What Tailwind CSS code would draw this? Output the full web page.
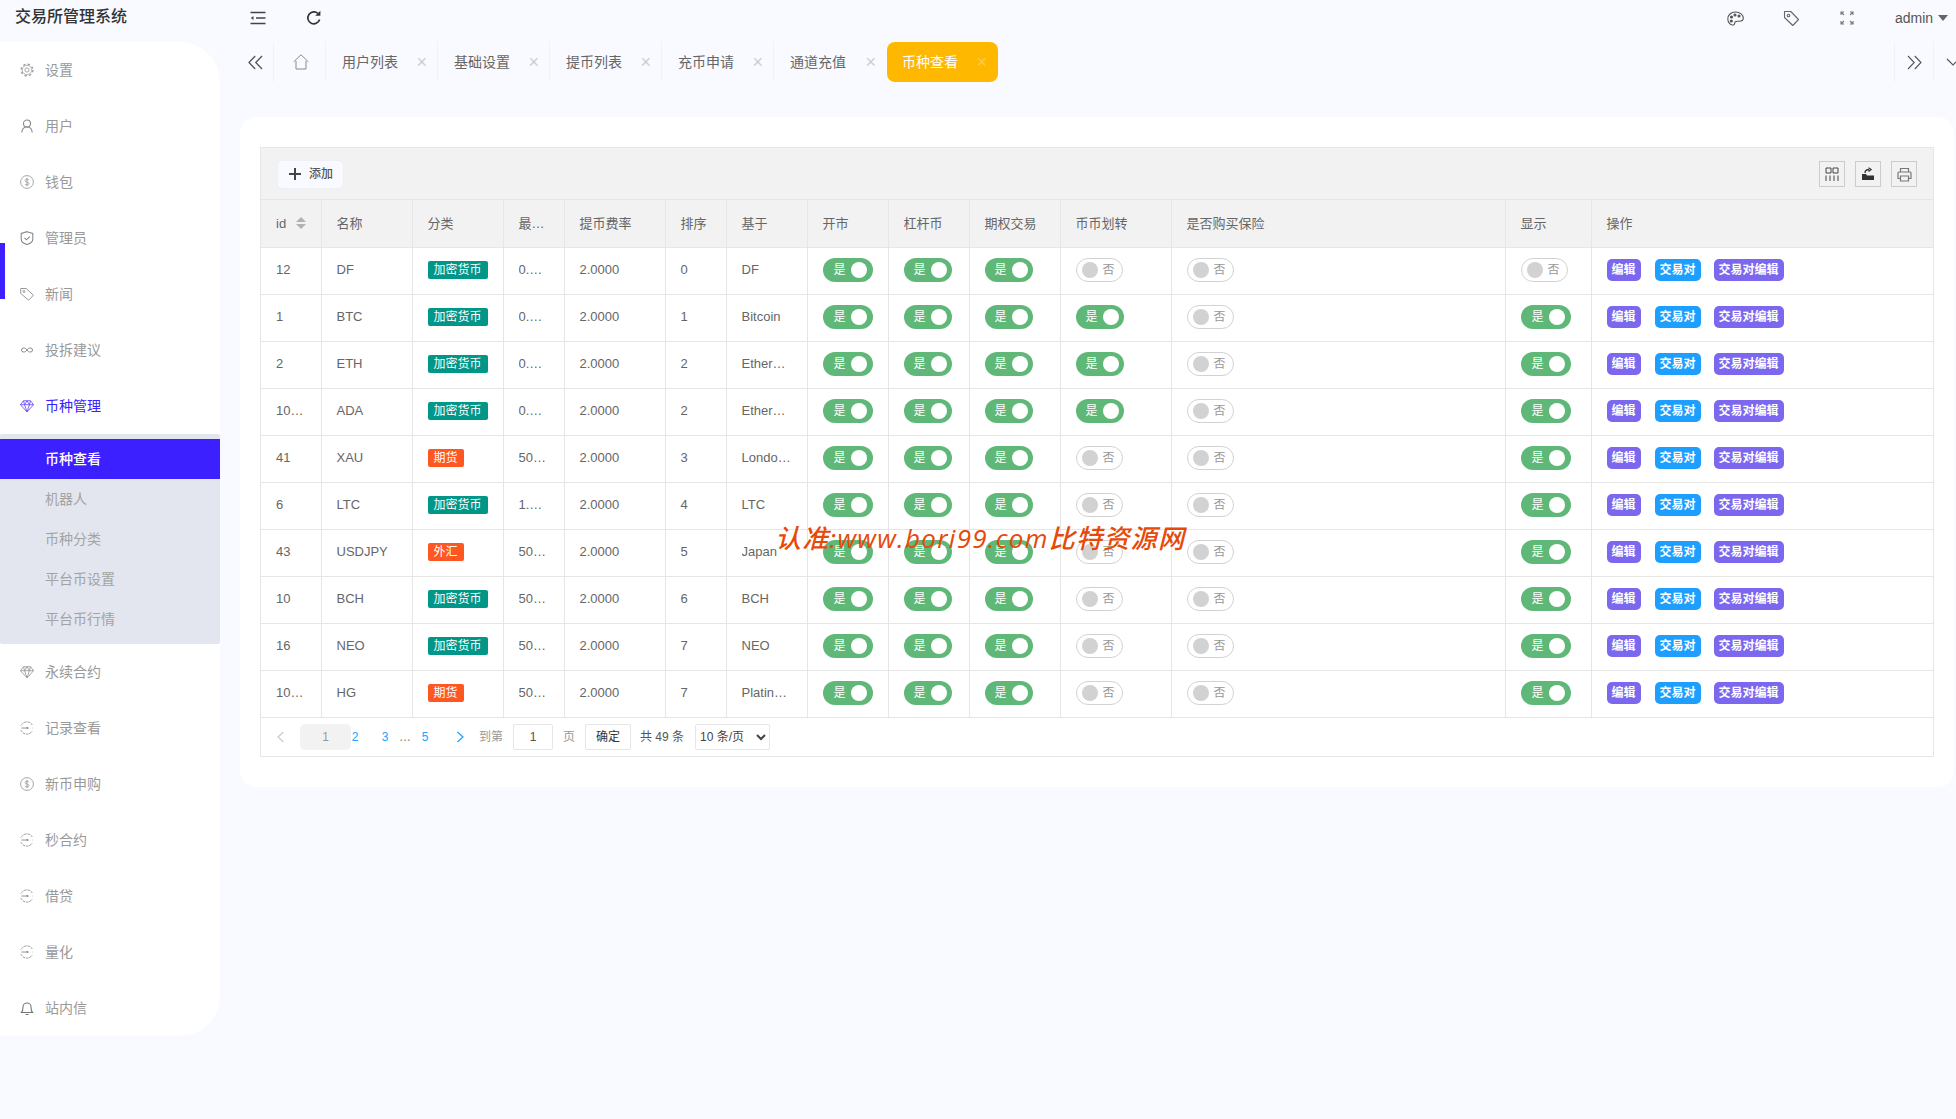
<!DOCTYPE html>
<html lang="zh"><head><meta charset="utf-8"><title>交易所管理系统</title>
<script src="https://cdn.jsdelivr.net/npm/@tailwindcss/browser@4"></script></head>
<body class="relative h-[1119px] w-[1956px] overflow-hidden bg-[#f8faff] font-['Liberation_Sans','Noto_Sans_CJK_SC',sans-serif] text-[13px] text-[#666]">
<svg class="hidden"><defs>
<symbol id="gear" viewBox="0 0 16 16"><circle cx="8" cy="8" r="6.700" fill="none" stroke="currentColor" stroke-width="1.500" stroke-dasharray="2.600 2.660"/><circle cx="8" cy="8" r="5.400" fill="none" stroke="currentColor" stroke-width=".8"/><circle cx="8" cy="8" r="2.400" fill="none" stroke="currentColor"/></symbol>
<symbol id="coin" viewBox="0 0 16 16"><circle cx="8" cy="8" r="7.300" fill="none" stroke="currentColor"/><path d="M10.200 5.800C9.800 5 8.900 4.700 8 4.700c-1.200 0-2.200.5-2.200 1.600 0 2.300 4.500 1.200 4.500 3.500 0 1.100-1 1.600-2.300 1.600-1 0-1.900-.4-2.300-1.200M8 3.200v9.600" fill="none" stroke="currentColor"/></symbol>
<symbol id="gem" viewBox="0 0 16 16"><path d="M4 2h8l3.500 4.500L8 14.800.5 6.500zM.5 6.500h15M5.200 6.500 8 14.800l2.800-8.300M4 2l1.200 4.500L8 2l2.800 4.500L12 2" fill="none" stroke="currentColor" stroke-linejoin="round"/></symbol>
<symbol id="spin" viewBox="0 0 16 16"><path d="M14 4.500A7.300 7.300 0 0 0 1 5.500M1 10.500a7.300 7.300 0 0 0 13 1" fill="none" stroke="currentColor" stroke-dasharray="2.800 1"/><path d="M1.500 8h8M14 8h.5" fill="none" stroke="currentColor"/><circle cx="8.500" cy="8" r="1.100" fill="currentColor"/></symbol>
</defs></svg>

<header class="flex h-[42px] items-center">
  <div class="w-[250px] self-start pl-[15px] pt-[6px] text-base font-medium leading-[22px] text-[#333]">交易所管理系统</div>
  <svg class="mb-[6px] size-4 text-[#444]" viewBox="0 0 16 16" fill="none" stroke="currentColor" stroke-width="1.400"><path d="M.5 2.500h15M6 8h9.500M.5 13.500h15"/><path d="M3.500 6v4L.8 8z" fill="currentColor" stroke="none"/></svg>
  <svg class="mb-[6px] ml-10 size-4 text-[#333]" viewBox="0 0 16 16" fill="none" stroke="currentColor" stroke-width="1.700"><path d="M13.600 9.500A6 6 0 1 1 12 3.500"/><path d="M9.200 5.700h5.200V.8z" fill="currentColor" stroke="none"/></svg>
  <svg class="mb-[6px] ml-[1405px] size-[17px] text-[#555]" viewBox="0 0 17 17" fill="none" stroke="currentColor" stroke-width="1.100"><path d="M8.500 2C4 2 .8 5 .8 9s3 6.500 5.700 6c1.700-.3 1-2 1.500-3 .7-1 2-.7 4-.7 2.500 0 4.300-1 4.300-3C16.300 5 13 2 8.500 2z"/><circle cx="4.500" cy="7" r="1" fill="currentColor"/><circle cx="4.300" cy="11" r="1" fill="currentColor"/><circle cx="8" cy="5" r="1" fill="currentColor"/><circle cx="12" cy="6" r="1" fill="currentColor"/></svg>
  <svg class="mb-[6px] ml-[39px] size-[17px] text-[#666]" viewBox="0 0 17 17" fill="none" stroke="currentColor" stroke-width="1.100"><path d="M1.500 1.500h6.300l7.700 8-5.700 6-8.300-8z" stroke-linejoin="round"/><circle cx="5.500" cy="5.500" r="1.300"/></svg>
  <svg class="mb-[6px] ml-[40px] size-[14px] text-[#777]" viewBox="0 0 14 14" fill="none" stroke="currentColor" stroke-width="1.100"><path d="M1 4V1h3M1 1l3 3M13 4V1h-3M13 1l-3 3M1 10v3h3M1 13l3-3M13 10v3h-3M13 13l-3-3"/></svg>
  <span class="mb-[6px] ml-[41px] text-sm text-[#555]">admin</span>
  <span class="mb-[6px] ml-[5px] size-0 border-x-[5.500px] border-t-[6px] border-x-transparent border-t-[#666]"></span>
</header>

<div class="flex items-start">
  <aside class="relative h-[994px] w-[220px] shrink-0 rounded-r-[40px] bg-white text-sm text-[#999]">
    <span class="absolute left-0 top-[201px] h-14 w-[5px] bg-[#3c20ff]"></span>
    <nav>
      <a class="flex h-14 items-center gap-[11px] pl-5"><svg class="size-[14px] text-[#999]"><use href="#gear"/></svg>设置</a>
      <a class="flex h-14 items-center gap-[11px] pl-5"><svg class="size-[14px] text-[#888]" viewBox="0 0 14 14" fill="none" stroke="currentColor" stroke-width="1.100"><circle cx="7" cy="4.500" r="3.500"/><path d="M1.800 13.500C2 10 4 8 7 8s5 2 5.200 5.500"/></svg>用户</a>
      <a class="flex h-14 items-center gap-[11px] pl-5"><svg class="size-[14px] text-[#999]"><use href="#coin"/></svg>钱包</a>
      <a class="flex h-14 items-center gap-[11px] pl-5"><svg class="size-[14px] text-[#888]" viewBox="0 0 14 14" fill="none" stroke="currentColor" stroke-width="1.100"><path d="M7 .7 12.800 2.500v5.500C12.800 10.800 10 12.700 7 13.500 4 12.700 1.200 10.800 1.200 8V2.500z"/><path d="m4.500 6.800 2 2 3.200-3.200"/></svg>管理员</a>
      <a class="flex h-14 items-center gap-[11px] pl-5"><svg class="size-[14px] text-[#999]" viewBox="0 0 14 14" fill="none" stroke="currentColor" stroke-width="1"><path d="M.7 1.500h5.500l7.200 6.700-4.700 5L.7 6.500z" stroke-linejoin="round"/><circle cx="4" cy="4.500" r="1"/></svg>新闻</a>
      <a class="flex h-14 items-center gap-[11px] pl-5"><svg class="size-[14px] text-[#888]" viewBox="0 0 14 14" fill="none" stroke="currentColor" stroke-width="1"><path d="M7 7C6 5.500 5 5 3.500 5a2 2 0 0 0 0 4C5 9 6 8.500 7 7c1-1.500 2-2 3.500-2a2 2 0 0 1 0 4C9 9 8 8.500 7 7z"/></svg>投拆建议</a>
      <a class="flex h-14 items-center gap-[11px] pl-5 text-[#3c20ff]"><svg class="size-[14px] text-[#6a50f5]"><use href="#gem"/></svg>币种管理</a>
      <div class="rounded-[2px] bg-[#e3e6ee] py-[5px] text-[#a3a3a3]">
        <a class="flex h-10 items-center bg-[#3c20ff] pl-[45px] font-medium text-white">币种查看</a>
        <a class="flex h-10 items-center pl-[45px]">机器人</a>
        <a class="flex h-10 items-center pl-[45px]">币种分类</a>
        <a class="flex h-10 items-center pl-[45px]">平台币设置</a>
        <a class="flex h-10 items-center pl-[45px]">平台币行情</a>
      </div>
      <a class="flex h-14 items-center gap-[11px] pl-5"><svg class="size-[14px] text-[#999]"><use href="#gem"/></svg>永续合约</a>
      <a class="flex h-14 items-center gap-[11px] pl-5"><svg class="size-[14px] text-[#888]"><use href="#spin"/></svg>记录查看</a>
      <a class="flex h-14 items-center gap-[11px] pl-5"><svg class="size-[14px] text-[#999]"><use href="#coin"/></svg>新币申购</a>
      <a class="flex h-14 items-center gap-[11px] pl-5"><svg class="size-[14px] text-[#888]"><use href="#spin"/></svg>秒合约</a>
      <a class="flex h-14 items-center gap-[11px] pl-5"><svg class="size-[14px] text-[#888]"><use href="#spin"/></svg>借贷</a>
      <a class="flex h-14 items-center gap-[11px] pl-5"><svg class="size-[14px] text-[#888]"><use href="#spin"/></svg>量化</a>
      <a class="flex h-14 items-center gap-[11px] pl-5"><svg class="size-[14px] text-[#777]" viewBox="0 0 14 14" fill="none" stroke="currentColor" stroke-width="1.100"><path d="M1.500 11.500c1-1 1.500-2 1.500-5.500a4 4 0 0 1 8 0c0 3.500.5 4.500 1.500 5.500zM5.500 13.500h3"/></svg>站内信</a>
    </nav>
  </aside>

  <main class="min-w-0 flex-1">
    <div class="flex h-10 items-center text-sm">
      <div class="flex h-10 w-[54px] items-center border-r border-[#f1f2f5] pl-7"><svg class="size-[15px] text-[#555]" viewBox="0 0 15 15" fill="none" stroke="currentColor" stroke-width="1.300"><path d="M7.200 1 1 7.500 7.200 14M14 1 7.800 7.500 14 14"/></svg></div>
      <div class="flex h-10 w-[52px] items-center justify-center border-r border-[#f1f2f5] pl-[3px]"><svg class="size-4 text-[#888]" viewBox="0 0 16 16" fill="none" stroke="currentColor" stroke-width="1"><path d="M.7 7.800 8 .8l7.300 7M3 7v8h10V7"/></svg></div>
      <div class="flex h-10 w-[112px] items-center justify-between border-r border-[#f1f2f5] pl-4 pr-[10px]">用户列表<span class="text-lg font-light leading-none text-[#ccc]">×</span></div>
      <div class="flex h-10 w-[112px] items-center justify-between border-r border-[#f1f2f5] pl-4 pr-[10px]">基础设置<span class="text-lg font-light leading-none text-[#ccc]">×</span></div>
      <div class="flex h-10 w-[112px] items-center justify-between border-r border-[#f1f2f5] pl-4 pr-[10px]">提币列表<span class="text-lg font-light leading-none text-[#ccc]">×</span></div>
      <div class="flex h-10 w-[112px] items-center justify-between border-r border-[#f1f2f5] pl-4 pr-[10px]">充币申请<span class="text-lg font-light leading-none text-[#ccc]">×</span></div>
      <div class="flex h-10 w-[113px] items-center justify-between pl-4 pr-[11px]">通道充值<span class="text-lg font-light leading-none text-[#ccc]">×</span></div>
      <div class="flex h-10 w-[111px] items-center justify-between rounded-lg bg-[#ffb800] pl-[15px] pr-[11px] text-white">币种查看<span class="text-lg font-light leading-none text-white/30">×</span></div>
      <div class="ml-auto flex h-10 w-10 items-center justify-center border-x border-[#f1f2f5]"><svg class="size-[15px] text-[#555]" viewBox="0 0 15 15" fill="none" stroke="currentColor" stroke-width="1.100"><path d="M1 1l6.200 6.500L1 14M7.800 1 14 7.500 7.800 14"/></svg></div>
      <div class="flex h-10 w-[22px] items-center overflow-hidden pl-3"><svg class="size-[14px] shrink-0 text-[#555]" viewBox="0 0 14 14" fill="none" stroke="currentColor" stroke-width="1.100"><path d="m1 4 6 6 6-6"/></svg></div>
    </div>

    <section class="ml-5 mr-[2px] mt-[35px] h-[670px] rounded-2xl bg-white pl-5 pr-[21px] pt-[30px]">
      <div class="w-[1674px] border border-[#e6e6e6]">
        <div class="flex h-[52px] items-center justify-between border-b border-[#e6e6e6] bg-[#f2f2f2] pl-4 pr-4 pt-[1px]">
          <button class="flex h-[29px] w-[67px] items-center gap-2 rounded-[5px] border border-[#eef0f5] bg-[#f8faff] pl-[11px] text-xs font-medium text-[#555]"><svg class="size-3 text-[#444]" viewBox="0 0 12 12" fill="none" stroke="currentColor" stroke-width="2"><path d="M6 0v12M0 6h12"/></svg>添加</button>
          <div class="flex gap-[10px]">
            <span class="flex size-[26px] items-center justify-center border border-[#ccc]"><svg class="size-[14px] text-[#444]" viewBox="0 0 14 14" fill="none" stroke="currentColor"><path d="M1 1h5v5H1zM8 1h5v5H8zM1 8.500V14M5 8.500V14M9 8.500V14M13 8.500V14"/></svg></span>
            <span class="flex size-[26px] items-center justify-center border border-[#ccc]"><svg class="size-[14px] text-[#333]" viewBox="0 0 14 14"><path d="M1 7h4l1 1.500h7V13H1z" fill="currentColor"/><path d="M4 6c0-2.500 1.500-3.500 4-3.500M7.500.8 10 2.500 7.500 4.500" fill="none" stroke="currentColor" stroke-width="1.300"/></svg></span>
            <span class="flex size-[26px] items-center justify-center border border-[#ccc]"><svg class="size-[15px] text-[#777]" viewBox="0 0 15 15" fill="none" stroke="currentColor" stroke-width="1.200"><path d="M3.500 5V1.500h8V5M3.500 11.500H1V6a1 1 0 0 1 1-1h11a1 1 0 0 1 1 1v5.500h-2.500M3.500 9h8v5h-8z"/></svg></span>
          </div>
        </div>
        <table class="w-full table-fixed border-collapse text-left [&_td]:h-[47px] [&_td]:border-b [&_td]:border-r [&_td]:border-[#e6e6e6] [&_td]:px-[15px] [&_td]:pb-[2px] [&_td:last-child]:border-r-0 [&_th]:h-[47px] [&_th]:border-b [&_th]:border-r [&_th]:border-[#e6e6e6] [&_th]:bg-[#f2f2f2] [&_th]:px-[15px] [&_th]:font-normal [&_th:last-child]:border-r-0">
          <colgroup><col class="w-[60px]"><col class="w-[91px]"><col class="w-[91px]"><col class="w-[61px]"><col class="w-[101px]"><col class="w-[61px]"><col class="w-[81px]"><col class="w-[81px]"><col class="w-[81px]"><col class="w-[91px]"><col class="w-[111px]"><col class="w-[334px]"><col class="w-[86px]"><col></colgroup>
          <thead><tr>
            <th><span class="flex items-center gap-[10px]">id<span class="flex flex-col gap-[2px]"><i class="size-0 border-x-[5px] border-b-[5px] border-x-transparent border-b-[#b2b2b2]"></i><i class="size-0 border-x-[5px] border-t-[5px] border-x-transparent border-t-[#b2b2b2]"></i></span></span></th>
            <th>名称</th><th>分类</th><th><div class="truncate">最小提币量</div></th><th>提币费率</th><th>排序</th><th>基于</th><th>开市</th><th>杠杆币</th><th>期权交易</th><th>币币划转</th><th>是否购买保险</th><th>显示</th><th>操作</th>
          </tr></thead>
          <tbody>
<tr><td>12</td><td>DF</td><td><span class="inline-block h-[18px] rounded-[2px] bg-[#009688] px-[6px] text-xs leading-[18px] text-white">加密货币</span></td><td><div class="truncate">0.0010</div></td><td>2.0000</td><td>0</td><td><div class="truncate">DF</div></td>
<td><span class="flex h-6 w-[50px] items-center justify-between rounded-full bg-[#5fb878] pl-[11px] pr-[6px] text-xs text-white">是<i class="size-4 rounded-full bg-white"></i></span></td><td><span class="flex h-6 w-[48px] items-center justify-between rounded-full bg-[#5fb878] pl-[10px] pr-[5px] text-xs text-white">是<i class="size-4 rounded-full bg-white"></i></span></td><td><span class="flex h-6 w-[48px] items-center justify-between rounded-full bg-[#5fb878] pl-[10px] pr-[5px] text-xs text-white">是<i class="size-4 rounded-full bg-white"></i></span></td>
<td><span class="flex h-6 w-[47px] items-center gap-[5px] rounded-full border border-[#d2d2d2] pl-[5px] text-xs text-[#999]"><i class="size-4 rounded-full bg-[#d2d2d2]"></i>否</span></td><td><span class="flex h-6 w-[47px] items-center gap-[5px] rounded-full border border-[#d2d2d2] pl-[5px] text-xs text-[#999]"><i class="size-4 rounded-full bg-[#d2d2d2]"></i>否</span></td><td><span class="flex h-6 w-[47px] items-center gap-[5px] rounded-full border border-[#d2d2d2] pl-[5px] text-xs text-[#999]"><i class="size-4 rounded-full bg-[#d2d2d2]"></i>否</span></td>
<td><div class="flex gap-[14px]"><a class="rounded-[5px] bg-[#7b68ee] px-[5px] text-xs font-bold leading-[22px] text-white">编辑</a><a class="rounded-[5px] bg-[#1e9fff] px-[5px] text-xs font-bold leading-[22px] text-white">交易对</a><a class="-ml-[1px] rounded-[5px] bg-[#7b68ee] px-[5px] text-xs font-bold leading-[22px] text-white">交易对编辑</a></div></td></tr>
<tr><td>1</td><td>BTC</td><td><span class="inline-block h-[18px] rounded-[2px] bg-[#009688] px-[6px] text-xs leading-[18px] text-white">加密货币</span></td><td><div class="truncate">0.0010</div></td><td>2.0000</td><td>1</td><td><div class="truncate">Bitcoin</div></td>
<td><span class="flex h-6 w-[50px] items-center justify-between rounded-full bg-[#5fb878] pl-[11px] pr-[6px] text-xs text-white">是<i class="size-4 rounded-full bg-white"></i></span></td><td><span class="flex h-6 w-[48px] items-center justify-between rounded-full bg-[#5fb878] pl-[10px] pr-[5px] text-xs text-white">是<i class="size-4 rounded-full bg-white"></i></span></td><td><span class="flex h-6 w-[48px] items-center justify-between rounded-full bg-[#5fb878] pl-[10px] pr-[5px] text-xs text-white">是<i class="size-4 rounded-full bg-white"></i></span></td>
<td><span class="flex h-6 w-[48px] items-center justify-between rounded-full bg-[#5fb878] pl-[10px] pr-[5px] text-xs text-white">是<i class="size-4 rounded-full bg-white"></i></span></td><td><span class="flex h-6 w-[47px] items-center gap-[5px] rounded-full border border-[#d2d2d2] pl-[5px] text-xs text-[#999]"><i class="size-4 rounded-full bg-[#d2d2d2]"></i>否</span></td><td><span class="flex h-6 w-[50px] items-center justify-between rounded-full bg-[#5fb878] pl-[11px] pr-[6px] text-xs text-white">是<i class="size-4 rounded-full bg-white"></i></span></td>
<td><div class="flex gap-[14px]"><a class="rounded-[5px] bg-[#7b68ee] px-[5px] text-xs font-bold leading-[22px] text-white">编辑</a><a class="rounded-[5px] bg-[#1e9fff] px-[5px] text-xs font-bold leading-[22px] text-white">交易对</a><a class="-ml-[1px] rounded-[5px] bg-[#7b68ee] px-[5px] text-xs font-bold leading-[22px] text-white">交易对编辑</a></div></td></tr>
<tr><td>2</td><td>ETH</td><td><span class="inline-block h-[18px] rounded-[2px] bg-[#009688] px-[6px] text-xs leading-[18px] text-white">加密货币</span></td><td><div class="truncate">0.0010</div></td><td>2.0000</td><td>2</td><td><div class="truncate">Ethereum</div></td>
<td><span class="flex h-6 w-[50px] items-center justify-between rounded-full bg-[#5fb878] pl-[11px] pr-[6px] text-xs text-white">是<i class="size-4 rounded-full bg-white"></i></span></td><td><span class="flex h-6 w-[48px] items-center justify-between rounded-full bg-[#5fb878] pl-[10px] pr-[5px] text-xs text-white">是<i class="size-4 rounded-full bg-white"></i></span></td><td><span class="flex h-6 w-[48px] items-center justify-between rounded-full bg-[#5fb878] pl-[10px] pr-[5px] text-xs text-white">是<i class="size-4 rounded-full bg-white"></i></span></td>
<td><span class="flex h-6 w-[48px] items-center justify-between rounded-full bg-[#5fb878] pl-[10px] pr-[5px] text-xs text-white">是<i class="size-4 rounded-full bg-white"></i></span></td><td><span class="flex h-6 w-[47px] items-center gap-[5px] rounded-full border border-[#d2d2d2] pl-[5px] text-xs text-[#999]"><i class="size-4 rounded-full bg-[#d2d2d2]"></i>否</span></td><td><span class="flex h-6 w-[50px] items-center justify-between rounded-full bg-[#5fb878] pl-[11px] pr-[6px] text-xs text-white">是<i class="size-4 rounded-full bg-white"></i></span></td>
<td><div class="flex gap-[14px]"><a class="rounded-[5px] bg-[#7b68ee] px-[5px] text-xs font-bold leading-[22px] text-white">编辑</a><a class="rounded-[5px] bg-[#1e9fff] px-[5px] text-xs font-bold leading-[22px] text-white">交易对</a><a class="-ml-[1px] rounded-[5px] bg-[#7b68ee] px-[5px] text-xs font-bold leading-[22px] text-white">交易对编辑</a></div></td></tr>
<tr><td><div class="truncate">1000001</div></td><td>ADA</td><td><span class="inline-block h-[18px] rounded-[2px] bg-[#009688] px-[6px] text-xs leading-[18px] text-white">加密货币</span></td><td><div class="truncate">0.0010</div></td><td>2.0000</td><td>2</td><td><div class="truncate">Ethereum</div></td>
<td><span class="flex h-6 w-[50px] items-center justify-between rounded-full bg-[#5fb878] pl-[11px] pr-[6px] text-xs text-white">是<i class="size-4 rounded-full bg-white"></i></span></td><td><span class="flex h-6 w-[48px] items-center justify-between rounded-full bg-[#5fb878] pl-[10px] pr-[5px] text-xs text-white">是<i class="size-4 rounded-full bg-white"></i></span></td><td><span class="flex h-6 w-[48px] items-center justify-between rounded-full bg-[#5fb878] pl-[10px] pr-[5px] text-xs text-white">是<i class="size-4 rounded-full bg-white"></i></span></td>
<td><span class="flex h-6 w-[48px] items-center justify-between rounded-full bg-[#5fb878] pl-[10px] pr-[5px] text-xs text-white">是<i class="size-4 rounded-full bg-white"></i></span></td><td><span class="flex h-6 w-[47px] items-center gap-[5px] rounded-full border border-[#d2d2d2] pl-[5px] text-xs text-[#999]"><i class="size-4 rounded-full bg-[#d2d2d2]"></i>否</span></td><td><span class="flex h-6 w-[50px] items-center justify-between rounded-full bg-[#5fb878] pl-[11px] pr-[6px] text-xs text-white">是<i class="size-4 rounded-full bg-white"></i></span></td>
<td><div class="flex gap-[14px]"><a class="rounded-[5px] bg-[#7b68ee] px-[5px] text-xs font-bold leading-[22px] text-white">编辑</a><a class="rounded-[5px] bg-[#1e9fff] px-[5px] text-xs font-bold leading-[22px] text-white">交易对</a><a class="-ml-[1px] rounded-[5px] bg-[#7b68ee] px-[5px] text-xs font-bold leading-[22px] text-white">交易对编辑</a></div></td></tr>
<tr><td>41</td><td>XAU</td><td><span class="inline-block h-[18px] rounded-[2px] bg-[#ff5722] px-[6px] text-xs leading-[18px] text-white">期货</span></td><td><div class="truncate">50.0000</div></td><td>2.0000</td><td>3</td><td><div class="truncate">London Gold</div></td>
<td><span class="flex h-6 w-[50px] items-center justify-between rounded-full bg-[#5fb878] pl-[11px] pr-[6px] text-xs text-white">是<i class="size-4 rounded-full bg-white"></i></span></td><td><span class="flex h-6 w-[48px] items-center justify-between rounded-full bg-[#5fb878] pl-[10px] pr-[5px] text-xs text-white">是<i class="size-4 rounded-full bg-white"></i></span></td><td><span class="flex h-6 w-[48px] items-center justify-between rounded-full bg-[#5fb878] pl-[10px] pr-[5px] text-xs text-white">是<i class="size-4 rounded-full bg-white"></i></span></td>
<td><span class="flex h-6 w-[47px] items-center gap-[5px] rounded-full border border-[#d2d2d2] pl-[5px] text-xs text-[#999]"><i class="size-4 rounded-full bg-[#d2d2d2]"></i>否</span></td><td><span class="flex h-6 w-[47px] items-center gap-[5px] rounded-full border border-[#d2d2d2] pl-[5px] text-xs text-[#999]"><i class="size-4 rounded-full bg-[#d2d2d2]"></i>否</span></td><td><span class="flex h-6 w-[50px] items-center justify-between rounded-full bg-[#5fb878] pl-[11px] pr-[6px] text-xs text-white">是<i class="size-4 rounded-full bg-white"></i></span></td>
<td><div class="flex gap-[14px]"><a class="rounded-[5px] bg-[#7b68ee] px-[5px] text-xs font-bold leading-[22px] text-white">编辑</a><a class="rounded-[5px] bg-[#1e9fff] px-[5px] text-xs font-bold leading-[22px] text-white">交易对</a><a class="-ml-[1px] rounded-[5px] bg-[#7b68ee] px-[5px] text-xs font-bold leading-[22px] text-white">交易对编辑</a></div></td></tr>
<tr><td>6</td><td>LTC</td><td><span class="inline-block h-[18px] rounded-[2px] bg-[#009688] px-[6px] text-xs leading-[18px] text-white">加密货币</span></td><td><div class="truncate">1.0000</div></td><td>2.0000</td><td>4</td><td><div class="truncate">LTC</div></td>
<td><span class="flex h-6 w-[50px] items-center justify-between rounded-full bg-[#5fb878] pl-[11px] pr-[6px] text-xs text-white">是<i class="size-4 rounded-full bg-white"></i></span></td><td><span class="flex h-6 w-[48px] items-center justify-between rounded-full bg-[#5fb878] pl-[10px] pr-[5px] text-xs text-white">是<i class="size-4 rounded-full bg-white"></i></span></td><td><span class="flex h-6 w-[48px] items-center justify-between rounded-full bg-[#5fb878] pl-[10px] pr-[5px] text-xs text-white">是<i class="size-4 rounded-full bg-white"></i></span></td>
<td><span class="flex h-6 w-[47px] items-center gap-[5px] rounded-full border border-[#d2d2d2] pl-[5px] text-xs text-[#999]"><i class="size-4 rounded-full bg-[#d2d2d2]"></i>否</span></td><td><span class="flex h-6 w-[47px] items-center gap-[5px] rounded-full border border-[#d2d2d2] pl-[5px] text-xs text-[#999]"><i class="size-4 rounded-full bg-[#d2d2d2]"></i>否</span></td><td><span class="flex h-6 w-[50px] items-center justify-between rounded-full bg-[#5fb878] pl-[11px] pr-[6px] text-xs text-white">是<i class="size-4 rounded-full bg-white"></i></span></td>
<td><div class="flex gap-[14px]"><a class="rounded-[5px] bg-[#7b68ee] px-[5px] text-xs font-bold leading-[22px] text-white">编辑</a><a class="rounded-[5px] bg-[#1e9fff] px-[5px] text-xs font-bold leading-[22px] text-white">交易对</a><a class="-ml-[1px] rounded-[5px] bg-[#7b68ee] px-[5px] text-xs font-bold leading-[22px] text-white">交易对编辑</a></div></td></tr>
<tr><td>43</td><td>USDJPY</td><td><span class="inline-block h-[18px] rounded-[2px] bg-[#ff5722] px-[6px] text-xs leading-[18px] text-white">外汇</span></td><td><div class="truncate">50.0000</div></td><td>2.0000</td><td>5</td><td><div class="truncate">Japan</div></td>
<td><span class="flex h-6 w-[50px] items-center justify-between rounded-full bg-[#5fb878] pl-[11px] pr-[6px] text-xs text-white">是<i class="size-4 rounded-full bg-white"></i></span></td><td><span class="flex h-6 w-[48px] items-center justify-between rounded-full bg-[#5fb878] pl-[10px] pr-[5px] text-xs text-white">是<i class="size-4 rounded-full bg-white"></i></span></td><td><span class="flex h-6 w-[48px] items-center justify-between rounded-full bg-[#5fb878] pl-[10px] pr-[5px] text-xs text-white">是<i class="size-4 rounded-full bg-white"></i></span></td>
<td><span class="flex h-6 w-[47px] items-center gap-[5px] rounded-full border border-[#d2d2d2] pl-[5px] text-xs text-[#999]"><i class="size-4 rounded-full bg-[#d2d2d2]"></i>否</span></td><td><span class="flex h-6 w-[47px] items-center gap-[5px] rounded-full border border-[#d2d2d2] pl-[5px] text-xs text-[#999]"><i class="size-4 rounded-full bg-[#d2d2d2]"></i>否</span></td><td><span class="flex h-6 w-[50px] items-center justify-between rounded-full bg-[#5fb878] pl-[11px] pr-[6px] text-xs text-white">是<i class="size-4 rounded-full bg-white"></i></span></td>
<td><div class="flex gap-[14px]"><a class="rounded-[5px] bg-[#7b68ee] px-[5px] text-xs font-bold leading-[22px] text-white">编辑</a><a class="rounded-[5px] bg-[#1e9fff] px-[5px] text-xs font-bold leading-[22px] text-white">交易对</a><a class="-ml-[1px] rounded-[5px] bg-[#7b68ee] px-[5px] text-xs font-bold leading-[22px] text-white">交易对编辑</a></div></td></tr>
<tr><td>10</td><td>BCH</td><td><span class="inline-block h-[18px] rounded-[2px] bg-[#009688] px-[6px] text-xs leading-[18px] text-white">加密货币</span></td><td><div class="truncate">50.0000</div></td><td>2.0000</td><td>6</td><td><div class="truncate">BCH</div></td>
<td><span class="flex h-6 w-[50px] items-center justify-between rounded-full bg-[#5fb878] pl-[11px] pr-[6px] text-xs text-white">是<i class="size-4 rounded-full bg-white"></i></span></td><td><span class="flex h-6 w-[48px] items-center justify-between rounded-full bg-[#5fb878] pl-[10px] pr-[5px] text-xs text-white">是<i class="size-4 rounded-full bg-white"></i></span></td><td><span class="flex h-6 w-[48px] items-center justify-between rounded-full bg-[#5fb878] pl-[10px] pr-[5px] text-xs text-white">是<i class="size-4 rounded-full bg-white"></i></span></td>
<td><span class="flex h-6 w-[47px] items-center gap-[5px] rounded-full border border-[#d2d2d2] pl-[5px] text-xs text-[#999]"><i class="size-4 rounded-full bg-[#d2d2d2]"></i>否</span></td><td><span class="flex h-6 w-[47px] items-center gap-[5px] rounded-full border border-[#d2d2d2] pl-[5px] text-xs text-[#999]"><i class="size-4 rounded-full bg-[#d2d2d2]"></i>否</span></td><td><span class="flex h-6 w-[50px] items-center justify-between rounded-full bg-[#5fb878] pl-[11px] pr-[6px] text-xs text-white">是<i class="size-4 rounded-full bg-white"></i></span></td>
<td><div class="flex gap-[14px]"><a class="rounded-[5px] bg-[#7b68ee] px-[5px] text-xs font-bold leading-[22px] text-white">编辑</a><a class="rounded-[5px] bg-[#1e9fff] px-[5px] text-xs font-bold leading-[22px] text-white">交易对</a><a class="-ml-[1px] rounded-[5px] bg-[#7b68ee] px-[5px] text-xs font-bold leading-[22px] text-white">交易对编辑</a></div></td></tr>
<tr><td>16</td><td>NEO</td><td><span class="inline-block h-[18px] rounded-[2px] bg-[#009688] px-[6px] text-xs leading-[18px] text-white">加密货币</span></td><td><div class="truncate">50.0000</div></td><td>2.0000</td><td>7</td><td><div class="truncate">NEO</div></td>
<td><span class="flex h-6 w-[50px] items-center justify-between rounded-full bg-[#5fb878] pl-[11px] pr-[6px] text-xs text-white">是<i class="size-4 rounded-full bg-white"></i></span></td><td><span class="flex h-6 w-[48px] items-center justify-between rounded-full bg-[#5fb878] pl-[10px] pr-[5px] text-xs text-white">是<i class="size-4 rounded-full bg-white"></i></span></td><td><span class="flex h-6 w-[48px] items-center justify-between rounded-full bg-[#5fb878] pl-[10px] pr-[5px] text-xs text-white">是<i class="size-4 rounded-full bg-white"></i></span></td>
<td><span class="flex h-6 w-[47px] items-center gap-[5px] rounded-full border border-[#d2d2d2] pl-[5px] text-xs text-[#999]"><i class="size-4 rounded-full bg-[#d2d2d2]"></i>否</span></td><td><span class="flex h-6 w-[47px] items-center gap-[5px] rounded-full border border-[#d2d2d2] pl-[5px] text-xs text-[#999]"><i class="size-4 rounded-full bg-[#d2d2d2]"></i>否</span></td><td><span class="flex h-6 w-[50px] items-center justify-between rounded-full bg-[#5fb878] pl-[11px] pr-[6px] text-xs text-white">是<i class="size-4 rounded-full bg-white"></i></span></td>
<td><div class="flex gap-[14px]"><a class="rounded-[5px] bg-[#7b68ee] px-[5px] text-xs font-bold leading-[22px] text-white">编辑</a><a class="rounded-[5px] bg-[#1e9fff] px-[5px] text-xs font-bold leading-[22px] text-white">交易对</a><a class="-ml-[1px] rounded-[5px] bg-[#7b68ee] px-[5px] text-xs font-bold leading-[22px] text-white">交易对编辑</a></div></td></tr>
<tr><td><div class="truncate">1000002</div></td><td>HG</td><td><span class="inline-block h-[18px] rounded-[2px] bg-[#ff5722] px-[6px] text-xs leading-[18px] text-white">期货</span></td><td><div class="truncate">50.0000</div></td><td>2.0000</td><td>7</td><td><div class="truncate">Platinum</div></td>
<td><span class="flex h-6 w-[50px] items-center justify-between rounded-full bg-[#5fb878] pl-[11px] pr-[6px] text-xs text-white">是<i class="size-4 rounded-full bg-white"></i></span></td><td><span class="flex h-6 w-[48px] items-center justify-between rounded-full bg-[#5fb878] pl-[10px] pr-[5px] text-xs text-white">是<i class="size-4 rounded-full bg-white"></i></span></td><td><span class="flex h-6 w-[48px] items-center justify-between rounded-full bg-[#5fb878] pl-[10px] pr-[5px] text-xs text-white">是<i class="size-4 rounded-full bg-white"></i></span></td>
<td><span class="flex h-6 w-[47px] items-center gap-[5px] rounded-full border border-[#d2d2d2] pl-[5px] text-xs text-[#999]"><i class="size-4 rounded-full bg-[#d2d2d2]"></i>否</span></td><td><span class="flex h-6 w-[47px] items-center gap-[5px] rounded-full border border-[#d2d2d2] pl-[5px] text-xs text-[#999]"><i class="size-4 rounded-full bg-[#d2d2d2]"></i>否</span></td><td><span class="flex h-6 w-[50px] items-center justify-between rounded-full bg-[#5fb878] pl-[11px] pr-[6px] text-xs text-white">是<i class="size-4 rounded-full bg-white"></i></span></td>
<td><div class="flex gap-[14px]"><a class="rounded-[5px] bg-[#7b68ee] px-[5px] text-xs font-bold leading-[22px] text-white">编辑</a><a class="rounded-[5px] bg-[#1e9fff] px-[5px] text-xs font-bold leading-[22px] text-white">交易对</a><a class="-ml-[1px] rounded-[5px] bg-[#7b68ee] px-[5px] text-xs font-bold leading-[22px] text-white">交易对编辑</a></div></td></tr>
          </tbody>
        </table>
        <div class="flex h-[38px] items-center text-xs">
          <svg class="ml-[14px] size-3 text-[#ccc]" viewBox="0 0 12 12" fill="none" stroke="currentColor" stroke-width="1.200"><path d="M8.500 1 3 6l5.500 5"/></svg>
          <span class="ml-[13px] flex h-[26px] w-[51px] items-center justify-center rounded-[5px] bg-[#f2f2f2] text-[#999]">1</span>
          <span class="w-2 text-center text-[#1e9fff]">2</span>
          <span class="ml-[22px] w-2 text-center text-[#1e9fff]">3</span>
          <span class="ml-[10px] w-[12px] text-center text-[#777]">…</span>
          <span class="ml-[10px] w-2 text-center text-[#1e9fff]">5</span>
          <svg class="ml-[25px] size-3 text-[#1e9fff]" viewBox="0 0 12 12" fill="none" stroke="currentColor" stroke-width="1.200"><path d="m3.500 1 5.500 5-5.500 5"/></svg>
          <span class="ml-[13px] text-[#999]">到第</span>
          <span class="ml-[10px] flex h-[26px] w-[40px] items-center justify-center rounded-[2px] border border-[#e6e6e6] text-[#555]">1</span>
          <span class="ml-[10px] text-[#999]">页</span>
          <span class="ml-[10px] flex h-[26px] w-[46px] items-center justify-center rounded-[2px] border border-[#e6e6e6] text-[#333]">确定</span>
          <span class="ml-[9px] w-[55px] text-[#555]">共 49 条</span>
          <select class="h-[26px] w-[75px] rounded-[2px] border border-[#e6e6e6] text-xs text-[#444]"><option>10 条/页</option></select>
        </div>
      </div>
    </section>
  </main>
</div>
<div class="absolute left-[775px] top-[518px] whitespace-nowrap font-['Open_Sans','Noto_Sans_CJK_SC',sans-serif] text-[26px] font-medium italic leading-10 tracking-[1.300px] text-[#e64a0a]">认准:www.bori99.com比特资源网</div>
</body></html>
